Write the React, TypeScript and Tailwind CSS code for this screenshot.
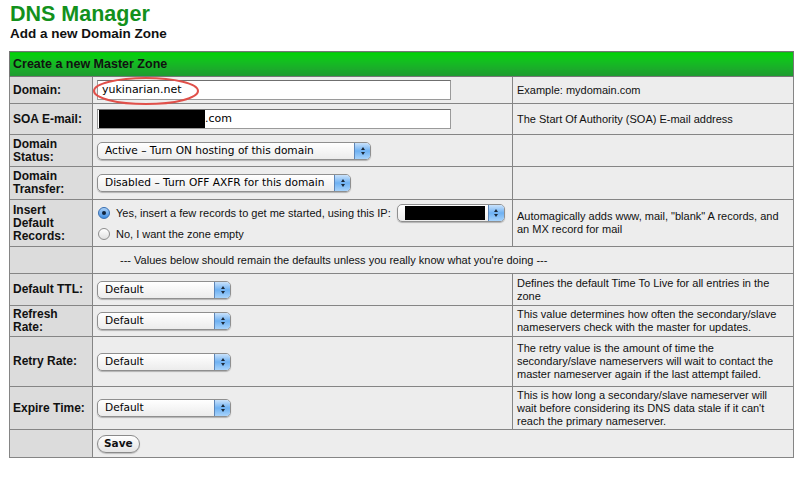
import React from 'react';

// Aqua-style popup used by every select on the form
const Popup: React.FC<{ width: string; label?: string; redacted?: boolean }> = ({ width, label, redacted }) => (
  <div
    className={`${width} h-[18px] shrink-0 flex items-stretch rounded-[5px] border border-[#8f8f8f] bg-gradient-to-b from-white to-[#ececec] shadow-[0_1px_1px_rgba(0,0,0,0.25)] overflow-hidden font-['DejaVu_Sans',sans-serif]`}
  >
    <div className="flex-1 flex items-center pl-[7px] text-[10.6px] text-black whitespace-nowrap overflow-hidden">
      {redacted ? <div className="w-full h-[14px] mr-[3px] bg-black" /> : label}
    </div>
    <div className="w-[16px] flex flex-col items-center justify-center gap-[2px] bg-gradient-to-b from-[#c9e2fb] via-[#6eb1f2] to-[#a7d3fb] border-l border-[#5d86b8]">
      <div className="w-0 h-0 border-l-[2.5px] border-r-[2.5px] border-b-[3px] border-l-transparent border-r-transparent border-b-[#1b2a3a]" />
      <div className="w-0 h-0 border-l-[2.5px] border-r-[2.5px] border-t-[3px] border-l-transparent border-r-transparent border-t-[#1b2a3a]" />
    </div>
  </div>
);

const TextBox: React.FC<{ children: React.ReactNode }> = ({ children }) => (
  <div className="w-[354px] h-[20px] flex items-center bg-white border border-[#9a9a9a] border-t-[#6f6f6f] pl-[4px] text-[11px] text-black font-['DejaVu_Sans',sans-serif]">
    {children}
  </div>
);

const Radio: React.FC<{ on?: boolean }> = ({ on }) => (
  <div
    className={`w-[12px] h-[12px] shrink-0 rounded-full flex items-center justify-center border ${
      on ? 'border-[#3a6fb0] bg-gradient-to-b from-[#a9d0f7] to-[#3f8ee2]' : 'border-[#8d8d8d] bg-gradient-to-b from-white to-[#e0e0e0]'
    }`}
  >
    {on && <div className="w-[4px] h-[4px] rounded-full bg-[#10243d]" />}
  </div>
);

const label = 'border border-[#858585] bg-[#dcdcdc] pl-[3px] pr-0 align-middle font-bold text-[12px] leading-[13px]';
const field = 'border border-[#858585] bg-[#ededed] px-[4px] align-middle';
const note = 'border border-[#858585] bg-[#ededed] px-[4px] align-middle leading-[13px]';

const App: React.FC = () => {
  return (
    <div className="w-[800px] h-[479px] bg-white text-[11px] text-[#111] font-['Liberation_Sans',Arial,sans-serif]">
      <div className="pl-[10px] pt-[2px]">
        <h1 className="text-[21.5px] leading-[24px] font-bold text-[#13911c]">DNS Manager</h1>
        <h2 className="text-[13.5px] leading-[16px] font-bold">Add a new Domain Zone</h2>
      </div>

      <div className="relative ml-[9px] mt-[9px] w-[784px]">
        <table className="w-[784px] border-collapse table-fixed">
          <colgroup>
            <col className="w-[83px]" />
            <col className="w-[420px]" />
            <col className="w-[281px]" />
          </colgroup>
          <tbody>
            <tr>
              <td colSpan={3} className="h-[25px] border border-[#777] bg-gradient-to-b from-[#00d400] to-[#1e9a30] px-[3px] font-bold text-[12.5px]">
                Create a new Master Zone
              </td>
            </tr>
            <tr>
              <td className={`${label} h-[27px]`}>Domain:</td>
              <td className={field}>
                <TextBox>yukinarian.net</TextBox>
              </td>
              <td className={note}>Example: mydomain.com</td>
            </tr>
            <tr>
              <td className={`${label} h-[31px]`}>SOA E-mail:</td>
              <td className={field}>
                <TextBox>
                  <span className="w-[106px] h-[18px] bg-black -ml-[3px]" />
                  <span>.com</span>
                </TextBox>
              </td>
              <td className={note}>The Start Of Authority (SOA) E-mail address</td>
            </tr>
            <tr>
              <td className={`${label} h-[32px]`}>
                Domain
                <br />
                Status:
              </td>
              <td className={field}>
                <Popup width="w-[274px]" label="Active – Turn ON hosting of this domain" />
              </td>
              <td className={note} />
            </tr>
            <tr>
              <td className={`${label} h-[33px]`}>
                Domain
                <br />
                Transfer:
              </td>
              <td className={field}>
                <Popup width="w-[254px]" label="Disabled – Turn OFF AXFR for this domain" />
              </td>
              <td className={note} />
            </tr>
            <tr>
              <td className={`${label} h-[47px]`}>
                Insert
                <br />
                Default
                <br />
                Records:
              </td>
              <td className={field}>
                <div className="flex items-center h-[22px] pl-[1px]">
                  <Radio on />
                  <span className="ml-[6px] whitespace-nowrap">Yes, insert a few records to get me started, using this IP:</span>
                  <div className="ml-[6px]">
                    <Popup width="w-[108px]" redacted />
                  </div>
                </div>
                <div className="flex items-center h-[20px] pl-[1px]">
                  <Radio />
                  <span className="ml-[6px]">No, I want the zone empty</span>
                </div>
              </td>
              <td className={note}>Automagically adds www, mail, "blank" A records, and an MX record for mail</td>
            </tr>
            <tr>
              <td className={`${label} h-[27px]`} />
              <td colSpan={2} className={`${field} pl-[27px]`}>
                --- Values below should remain the defaults unless you really know what you're doing ---
              </td>
            </tr>
            <tr>
              <td className={`${label} h-[32px]`}>Default TTL:</td>
              <td className={field}>
                <Popup width="w-[134px]" label="Default" />
              </td>
              <td className={note}>Defines the default Time To Live for all entries in the zone</td>
            </tr>
            <tr>
              <td className={`${label} h-[31px]`}>
                Refresh
                <br />
                Rate:
              </td>
              <td className={field}>
                <Popup width="w-[134px]" label="Default" />
              </td>
              <td className={note}>This value determines how often the secondary/slave nameservers check with the master for updates.</td>
            </tr>
            <tr>
              <td className={`${label} h-[50px]`}>Retry Rate:</td>
              <td className={field}>
                <Popup width="w-[134px]" label="Default" />
              </td>
              <td className={note}>
                The retry value is the amount of time the secondary/slave nameservers will wait to contact the master nameserver again if the last attempt failed.
              </td>
            </tr>
            <tr>
              <td className={`${label} h-[43px]`}>Expire Time:</td>
              <td className={field}>
                <Popup width="w-[134px]" label="Default" />
              </td>
              <td className={note}>
                This is how long a secondary/slave nameserver will wait before considering its DNS data stale if it can't reach the primary nameserver.
              </td>
            </tr>
            <tr>
              <td className={`${label} h-[28px]`} />
              <td colSpan={2} className={field}>
                <button className="h-[18px] px-[6px] rounded-full border border-[#8a8a8a] bg-gradient-to-b from-white to-[#e4e4e4] text-[10.5px] font-bold leading-none font-['DejaVu_Sans',sans-serif] shadow-[0_1px_1px_rgba(0,0,0,0.2)]">
                  Save
                </button>
              </td>
            </tr>
          </tbody>
        </table>

        {/* red marker ring around the domain value */}
        <svg className="absolute left-[83px] top-[25px] pointer-events-none" width="108" height="30" viewBox="0 0 108 30">
          <ellipse cx="54" cy="15" rx="52" ry="13" fill="none" stroke="#e0504a" strokeWidth="2" />
        </svg>
      </div>
    </div>
  );
};

export default App;
